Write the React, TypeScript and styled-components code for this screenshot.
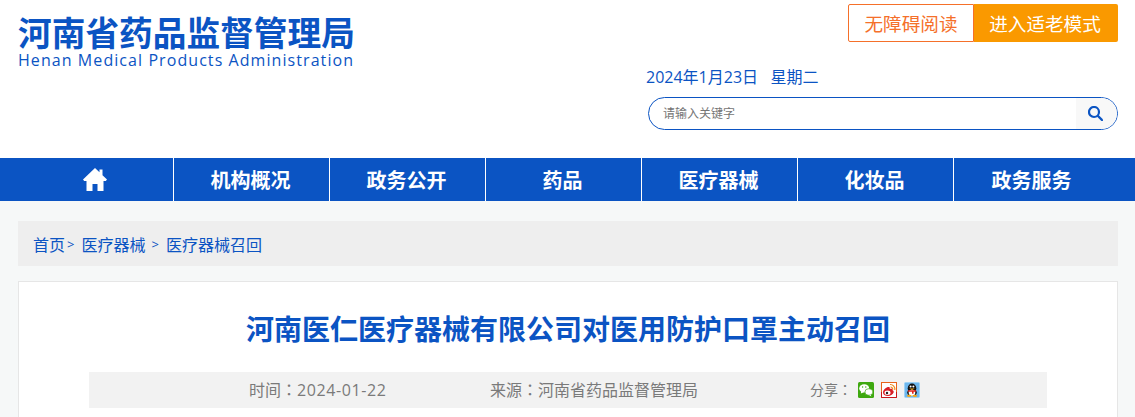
import styled, { createGlobalStyle } from 'styled-components';

const BLUE = '#0b54c3';
const FONT = '"Open Sans", "Noto Sans CJK SC", sans-serif';

const GlobalStyle = createGlobalStyle`
  html, body {
    margin: 0;
    padding: 0;
    background: #f6f8f8;
    font-family: ${FONT};
  }
  * { box-sizing: border-box; }
`;

const Page = styled.div`
  width: 1135px;
  height: 417px;
  overflow: hidden;
`;

const Header = styled.header`
  display: flex;
  justify-content: space-between;
  height: 158px;
  padding: 4px 17px 0 18px;
  background: #fff;
`;

const Logo = styled.div`
  display: flex;
  flex-direction: column;
  padding-top: 10px;
`;

const LogoTitle = styled.div`
  font-size: 33.7px;
  line-height: 38px;
  font-weight: 700;
  color: ${BLUE};
  white-space: nowrap;
`;

const LogoSub = styled.div`
  font-size: 16px;
  line-height: 16px;
  letter-spacing: 1.07px;
  color: ${BLUE};
  white-space: nowrap;
`;

const Tools = styled.div`
  display: flex;
  flex-direction: column;
  align-items: flex-end;
  width: 472px;
`;

const ModeRow = styled.div`
  display: flex;
`;

const ModeButton = styled.a<{ $filled?: boolean }>`
  display: flex;
  align-items: center;
  justify-content: center;
  width: ${(p) => (p.$filled ? '144px' : '126px')};
  height: 38px;
  padding: ${(p) => (p.$filled ? '0 2px 2px 0' : '0 0 2px')};
  font-size: 18.6px;
  color: ${(p) => (p.$filled ? '#fff' : '#f5702a')};
  background: ${(p) => (p.$filled ? '#fa9900' : '#fff')};
  border: ${(p) => (p.$filled ? 'none' : '1px solid #f5702a')};
  border-radius: ${(p) => (p.$filled ? '0 2px 2px 0' : '2px 0 0 2px')};
`;

const DateLine = styled.div`
  align-self: flex-start;
  margin-top: 25px;
  font-size: 16px;
  line-height: 20px;
  color: ${BLUE};
  white-space: pre;
`;

const SearchBox = styled.div`
  display: flex;
  align-items: center;
  justify-content: space-between;
  width: 470px;
  height: 33px;
  margin-top: 10px;
  border: 1px solid ${BLUE};
  border-radius: 17px;
  overflow: hidden;
`;

const SearchHint = styled.span`
  padding: 0 0 2px 14px;
  font-size: 12px;
  color: #757575;
`;

const SearchButton = styled.div`
  display: flex;
  align-items: center;
  justify-content: center;
  width: 41px;
  height: 100%;
  padding: 0 3px 1px 0;
  background: #f8f8f8;
`;

const Nav = styled.nav`
  display: flex;
  height: 43px;
  padding-left: 18px;
  background: ${BLUE};
`;

const NavItem = styled.a<{ $last?: boolean }>`
  display: flex;
  align-items: center;
  justify-content: center;
  width: ${(p) => (p.$last ? '155px' : '156px')};
  padding-right: ${(p) => (p.$last ? '0' : '2px')};
  font-size: 20px;
  font-weight: 700;
  color: #fff;
  border-right: ${(p) => (p.$last ? 'none' : '1px solid #fff')};
`;

const Content = styled.main`
  display: flex;
  flex-direction: column;
  gap: 15px;
  padding: 20px 17px 0 18px;
`;

const Crumbs = styled.div`
  display: flex;
  align-items: center;
  height: 45px;
  padding-left: 15px;
  font-size: 16px;
  background: #eeeeee;
  color: ${BLUE};
  white-space: nowrap;
`;

const CrumbSep = styled.span<{ $before: number }>`
  margin: 0 7px 0 ${(p) => p.$before}px;
  font-size: 13px;
`;

const Card = styled.article`
  height: 200px;
  padding: 0 70px;
  background: #fff;
  border: 1px solid #e6e6e6;
`;

const Title = styled.h1`
  margin: 0;
  padding-top: 27px;
  height: 90px;
  font-size: 28px;
  line-height: 40px;
  font-weight: 700;
  text-align: center;
  color: ${BLUE};
`;

const Meta = styled.div`
  display: flex;
  align-items: center;
  height: 36px;
  padding-left: 160px;
  background: #f2f2f2;
  color: #7a7a7a;
  font-size: 16px;
`;

const MetaText = styled.span<{ $width: number }>`
  width: ${(p) => p.$width}px;
  padding-bottom: 2px;
  white-space: nowrap;
`;

const MetaDate = styled.span`
  letter-spacing: 0.6px;
`;

// the Traditional face centres its full-width colon, as the reference does
const Colon = styled.span`
  font-family: "Noto Sans CJK TC", sans-serif;
`;

const ShareLabel = styled.span`
  width: 48px;
  padding-bottom: 2px;
  font-size: 14px;
  white-space: nowrap;
`;

const ShareIcons = styled.div`
  display: flex;
  gap: 7px;
`;

const HomeIcon = () => (
  <svg width="24" height="23" viewBox="0 0 24 23">
    <path fill="#fff" d="M12 0 0 11.5 1.2 13H3.5v10h6v-7h5v7h6V13h2.3L24 11.5 19.5 7.2V1.5h-3v2.8z" />
  </svg>
);

const SearchIcon = () => (
  <svg width="15" height="15" viewBox="0 0 15 15" fill="none" stroke={BLUE}>
    <circle cx="6" cy="6" r="5" strokeWidth="2.2" />
    <path d="M10 10 14 14" strokeWidth="2.4" strokeLinecap="round" />
  </svg>
);

const WechatIcon = () => (
  <svg width="16" height="16" viewBox="0 0 16 16">
    <rect width="16" height="16" rx="1.5" fill="#3ea80f" />
    <ellipse cx="6.2" cy="6.4" rx="5" ry="4.2" fill="#fff" />
    <path d="M3.2 9 2.8 11.6 5.8 10.2z" fill="#fff" />
    <ellipse cx="10.9" cy="10" rx="4" ry="3.3" fill="#fff" stroke="#3ea80f" strokeWidth=".7" />
    <path d="M12.5 12.4 13.4 14.4 11 13z" fill="#fff" />
    <circle cx="4.6" cy="5" r=".7" fill="#3ea80f" />
    <circle cx="7.8" cy="5" r=".7" fill="#3ea80f" />
  </svg>
);

const WeiboIcon = () => (
  <svg width="16" height="16" viewBox="0 0 16 16">
    <rect x=".5" y=".5" width="15" height="15" fill="#fff" stroke="#e8641b" />
    <path d="M.5 10v5.500h15V10" fill="none" stroke="#c8161d" />
    <path d="M2 10.500C2 7.500 6 4.500 8 5c1 .3 1 1.300.7 2 2-.6 3.300 0 3 1.500 1 .4 1.300 1.200.8 2.300-.8 2-3 3.200-5.500 3.200C4 14 2 12.500 2 10.500z" fill="#d81e26" />
    <ellipse cx="6.500" cy="10.800" rx="3" ry="2.200" fill="#fff" />
    <circle cx="6" cy="11" r="1.200" fill="#222" />
    <path d="M9 2.500a4.600 4.600 0 0 1 4.800 5.500M9.500 5a2.200 2.200 0 0 1 2.200 2.600" fill="none" stroke="#f08a1d" strokeWidth="1.200" />
  </svg>
);

const QqIcon = () => (
  <svg width="16" height="16" viewBox="0 0 16 16">
    <rect x=".5" y=".5" width="15" height="15" rx="1" fill="#6db7ee" stroke="#9fd2f5" />
    <ellipse cx="8" cy="6.200" rx="4.300" ry="4.700" fill="#111" />
    <ellipse cx="8" cy="10.500" rx="4.800" ry="3.600" fill="#111" />
    <ellipse cx="8" cy="10.800" rx="3.300" ry="3.100" fill="#fff" />
    <circle cx="6.600" cy="4.600" r="1" fill="#fff" />
    <circle cx="9.400" cy="4.600" r="1" fill="#fff" />
    <path d="M5.200 6.400h5.600L8 8z" fill="#f5a614" />
    <path d="M3.800 8.300h8.400v1.400H9.600v2H8v-2H3.800z" fill="#e3241b" />
    <ellipse cx="5.200" cy="13.800" rx="2.400" ry="1.100" fill="#f5a614" />
    <ellipse cx="10.800" cy="13.800" rx="2.400" ry="1.100" fill="#f5a614" />
  </svg>
);

const navItems = ['机构概况', '政务公开', '药品', '医疗器械', '化妆品', '政务服务'];

export default function App() {
  return (
    <Page>
      <GlobalStyle />
      <Header>
        <Logo>
          <LogoTitle>河南省药品监督管理局</LogoTitle>
          <LogoSub>Henan Medical Products Administration</LogoSub>
        </Logo>
        <Tools>
          <ModeRow>
            <ModeButton>无障碍阅读</ModeButton>
            <ModeButton $filled>进入适老模式</ModeButton>
          </ModeRow>
          <DateLine>2024年1月23日   星期二</DateLine>
          <SearchBox>
            <SearchHint>请输入关键字</SearchHint>
            <SearchButton>
              <SearchIcon />
            </SearchButton>
          </SearchBox>
        </Tools>
      </Header>
      <Nav>
        <NavItem>
          <HomeIcon />
        </NavItem>
        {navItems.map((item, i) => (
          <NavItem key={item} $last={i === navItems.length - 1}>
            {item}
          </NavItem>
        ))}
      </Nav>
      <Content>
        <Crumbs>
          首页<CrumbSep $before={2}>&gt;</CrumbSep>医疗器械<CrumbSep $before={6}>&gt;</CrumbSep>医疗器械召回
        </Crumbs>
        <Card>
          <Title>河南医仁医疗器械有限公司对医用防护口罩主动召回</Title>
          <Meta>
            <MetaText $width={241}>
              时间<Colon>：</Colon>
              <MetaDate>2024-01-22</MetaDate>
            </MetaText>
            <MetaText $width={320}>
              来源<Colon>：</Colon>河南省药品监督管理局
            </MetaText>
            <ShareLabel>
              分享<Colon>：</Colon>
            </ShareLabel>
            <ShareIcons>
              <WechatIcon />
              <WeiboIcon />
              <QqIcon />
            </ShareIcons>
          </Meta>
        </Card>
      </Content>
    </Page>
  );
}
